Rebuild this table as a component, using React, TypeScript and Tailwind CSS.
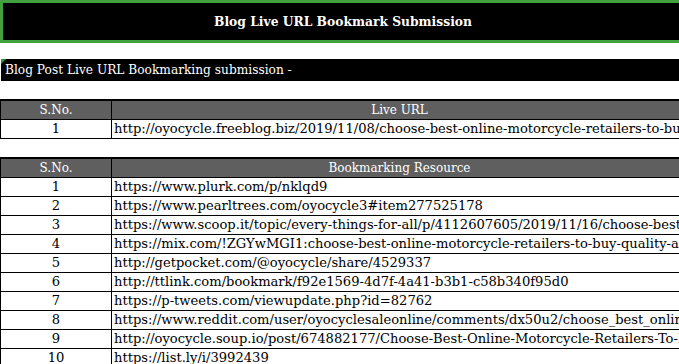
const liveUrls = [
  "http://oyocycle.freeblog.biz/2019/11/08/choose-best-online-motorcycle-retailers-to-buy-quality-accessories/",
];

const resources = [
  "https://www.plurk.com/p/nklqd9",
  "https://www.pearltrees.com/oyocycle3#item277525178",
  "https://www.scoop.it/topic/every-things-for-all/p/4112607605/2019/11/16/choose-best-online-motorcycle-retailers",
  "https://mix.com/!ZGYwMGI1:choose-best-online-motorcycle-retailers-to-buy-quality-accessories",
  "http://getpocket.com/@oyocycle/share/4529337",
  "http://ttlink.com/bookmark/f92e1569-4d7f-4a41-b3b1-c58b340f95d0",
  "https://p-tweets.com/viewupdate.php?id=82762",
  "https://www.reddit.com/user/oyocyclesaleonline/comments/dx50u2/choose_best_online_motorcycle_retailers/",
  "http://oyocycle.soup.io/post/674882177/Choose-Best-Online-Motorcycle-Retailers-To-Buy-Quality",
  "https://list.ly/i/3992439",
];

function Sheet({ title, rows }: { title: string; rows: string[] }) {
  return (
    <div className="grid grid-cols-[111px_576px] border-t-2 border-l border-black">
      <div className="h-[19px] bg-[#5f5f5f] border-r border-b border-black text-white text-center text-[12px] leading-[18px]">
        S.No.
      </div>
      <div className="h-[19px] bg-[#5f5f5f] border-r border-b border-black text-white text-center text-[12px] leading-[18px]">
        {title}
      </div>
      {rows.map((url, i) => (
        <div key={url} className="contents">
          <div className="h-[19px] border-r border-b border-black text-center leading-[18px]">{i + 1}</div>
          <div className="h-[19px] border-r border-b border-black pl-[2px] leading-[18px] whitespace-nowrap overflow-hidden">
            {url}
          </div>
        </div>
      ))}
    </div>
  );
}

export default function App() {
  return (
    <div className="w-[679px] h-[364px] overflow-hidden bg-white text-black text-[13.1px] font-['DejaVu_Serif',serif]">
      <div className="w-[687px]">
        <div className="h-[43px] w-[683px] bg-black border-t-[3px] border-b-[3px] border-l-[3px] border-[#43a03f] flex items-center justify-center">
          <h1 className="text-white font-bold text-[12.3px] pt-[1px]">Blog Live URL Bookmark Submission</h1>
        </div>

        <div className="relative mt-[16px] ml-[1px] h-[22px] bg-black text-white text-[12.2px] leading-[22px] pl-[4px]">
          <span className="absolute left-0 top-0 w-0 h-0 border-t-[5px] border-r-[5px] border-t-[#2e9a2e] border-r-transparent" />
          Blog Post Live URL Bookmarking submission -
        </div>

        <div className="mt-[18px]">
          <Sheet title="Live URL" rows={liveUrls} />
        </div>

        <div className="mt-[18px]">
          <Sheet title="Bookmarking Resource" rows={resources} />
        </div>
      </div>
    </div>
  );
}
